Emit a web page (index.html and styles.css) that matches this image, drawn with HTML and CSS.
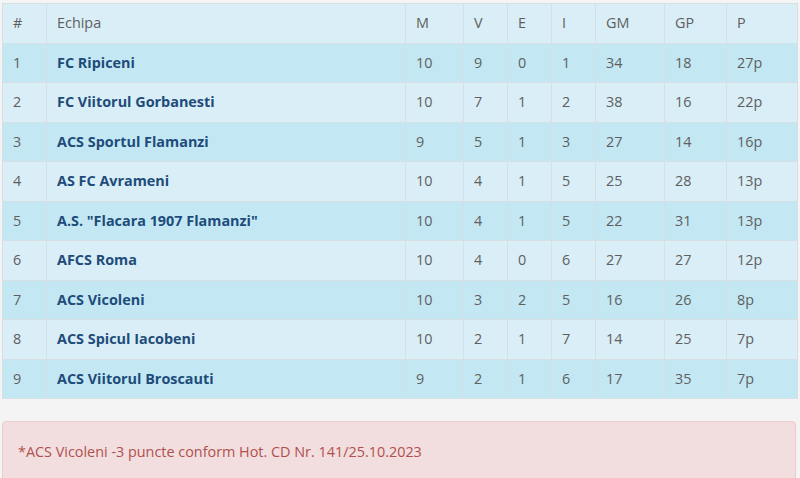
FILE: index.html
```html
<!DOCTYPE html>
<html lang="ro">
<head>
<meta charset="utf-8">
<title>Clasament</title>
<link rel="stylesheet" href="styles.css">
</head>
<body>
<div class="page">
  <table class="standings">
    <colgroup>
      <col class="c-pos"><col class="c-team"><col class="c-m"><col class="c-v"><col class="c-e"><col class="c-i"><col class="c-gm"><col class="c-gp"><col class="c-p">
    </colgroup>
    <thead>
      <tr><th>#</th><th>Echipa</th><th>M</th><th>V</th><th>E</th><th>I</th><th>GM</th><th>GP</th><th>P</th></tr>
    </thead>
    <tbody>
      <tr><td>1</td><td class="team">FC Ripiceni</td><td>10</td><td>9</td><td>0</td><td>1</td><td>34</td><td>18</td><td>27p</td></tr>
      <tr><td>2</td><td class="team">FC Viitorul Gorbanesti</td><td>10</td><td>7</td><td>1</td><td>2</td><td>38</td><td>16</td><td>22p</td></tr>
      <tr><td>3</td><td class="team">ACS Sportul Flamanzi</td><td>9</td><td>5</td><td>1</td><td>3</td><td>27</td><td>14</td><td>16p</td></tr>
      <tr><td>4</td><td class="team">AS FC Avrameni</td><td>10</td><td>4</td><td>1</td><td>5</td><td>25</td><td>28</td><td>13p</td></tr>
      <tr><td>5</td><td class="team">A.S. "Flacara 1907 Flamanzi"</td><td>10</td><td>4</td><td>1</td><td>5</td><td>22</td><td>31</td><td>13p</td></tr>
      <tr><td>6</td><td class="team">AFCS Roma</td><td>10</td><td>4</td><td>0</td><td>6</td><td>27</td><td>27</td><td>12p</td></tr>
      <tr><td>7</td><td class="team">ACS Vicoleni</td><td>10</td><td>3</td><td>2</td><td>5</td><td>16</td><td>26</td><td>8p</td></tr>
      <tr><td>8</td><td class="team">ACS Spicul Iacobeni</td><td>10</td><td>2</td><td>1</td><td>7</td><td>14</td><td>25</td><td>7p</td></tr>
      <tr><td>9</td><td class="team">ACS Viitorul Broscauti</td><td>9</td><td>2</td><td>1</td><td>6</td><td>17</td><td>35</td><td>7p</td></tr>
    </tbody>
  </table>
  <div class="alert">*ACS Vicoleni -3 puncte conform Hot. CD Nr. 141/25.10.2023</div>
</div>
</body>
</html>
```
FILE: styles.css
```css
html, body {
  margin: 0;
  padding: 0;
  background: #f4f4f4;
}
body {
  font-family: "Open Sans", "Noto Sans", sans-serif;
  font-size: 14.4px;
  line-height: 18.5px;
  color: #555;
}
.page {
  padding: 3px 3px 0 2px;
}
.standings {
  width: 795px;
  border-collapse: collapse;
  table-layout: fixed;
  margin-bottom: 22px;
}
.c-pos { width: 44px; }
.c-team { width: 359px; }
.c-m { width: 58px; }
.c-v { width: 44px; }
.c-e { width: 44px; }
.c-i { width: 44px; }
.c-gm { width: 69px; }
.c-gp { width: 62px; }
.c-p { width: 71px; }
.standings th,
.standings td {
  padding: 10px 10px;
  border: 1px solid #d6dfe3;
  text-align: left;
  font-weight: normal;
  white-space: nowrap;
  color: #5f5f5f;
}
.standings thead tr {
  background: #d9eef6;
}
.standings tbody tr:nth-child(odd) {
  background: #c3e8f4;
}
.standings tbody tr:nth-child(even) {
  background: #d9eef6;
}
.standings td.team {
  font-weight: bold;
  color: #1e4c7a;
}
.alert {
  box-sizing: border-box;
  width: 794px;
  padding: 21px 15px 20px 15px;
  background: #f2dede;
  border: 1px solid #ebccd1;
  border-radius: 4px;
  color: #b0504e;
}
```
